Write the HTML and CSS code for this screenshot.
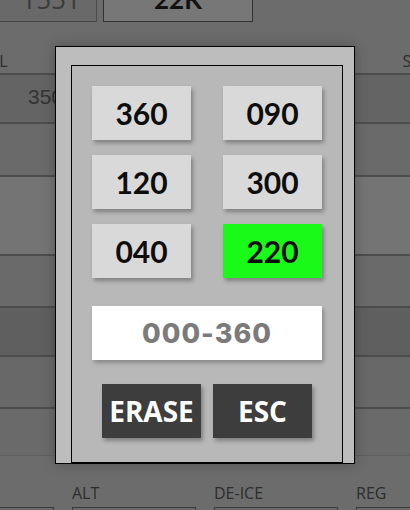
FILE: index.html
```html
<!DOCTYPE html>
<html>
<head>
<meta charset="utf-8">
<link rel="stylesheet" href="styles.css">
</head>
<body>
<div class="page">
  <div class="topbar">
    <div class="tbox tbox-a">1551</div>
    <div class="tbox tbox-b">22K</div>
  </div>
  <div class="labels">
    <span class="lbl lbl-fl">FL</span>
    <span class="lbl lbl-st">ST</span>
  </div>
  <div class="rows">
    <div class="row r1"><span class="cell-val">350</span></div>
    <div class="row r2"></div>
    <div class="row r3"></div>
    <div class="row r4"></div>
    <div class="row r5"></div>
    <div class="row r6"></div>
    <div class="row r7"></div>
  </div>
  <div class="footer">
    <div class="fcol"><span class="flbl">&nbsp;</span><div class="fbox"></div></div>
    <div class="fcol"><span class="flbl">ALT</span><div class="fbox"></div></div>
    <div class="fcol"><span class="flbl">DE-ICE</span><div class="fbox"></div></div>
    <div class="fcol"><span class="flbl">REG</span><div class="fbox"></div></div>
  </div>
</div>

<div class="modal">
  <div class="panel">
    <div class="grid">
      <button class="key">360</button>
      <button class="key">090</button>
      <button class="key">120</button>
      <button class="key">300</button>
      <button class="key">040</button>
      <button class="key key-on">220</button>
    </div>
    <div class="entry">000-360</div>
    <div class="actions">
      <button class="act">ERASE</button>
      <button class="act">ESC</button>
    </div>
  </div>
</div>
</body>
</html>
```
FILE: styles.css
```css
html, body {
  margin: 0;
  padding: 0;
}
body {
  width: 410px;
  height: 510px;
  overflow: hidden;
  background: #6c6c6c;
  font-family: "Open Sans", "Liberation Sans", sans-serif;
  position: relative;
}
.page {
  width: 410px;
}
.topbar {
  display: flex;
  margin-top: -14px;
  height: 36px;
}
.tbox {
  box-sizing: border-box;
  height: 36px;
  display: flex;
  align-items: center;
  justify-content: center;
  font-size: 26px;
  line-height: 1;
  padding-bottom: 10px;
}
.tbox-a {
  width: 97px;
  background: #696969;
  border-bottom: 1px solid #454545;
  border-right: 1px solid #4c4c4c;
  color: #3a3a3a;
  padding-left: 6px;
}
.tbox-b {
  width: 150px;
  margin-left: 6px;
  background: #777777;
  border: 1px solid #333333;
  border-top: none;
  color: #111111;
  font-weight: 700;
  font-family: Lato, "Open Sans", sans-serif;
}
.labels {
  height: 51px;
  display: flex;
  justify-content: space-between;
  align-items: flex-end;
  padding-bottom: 4px;
  box-sizing: border-box;
}
.lbl {
  font-size: 16px;
  line-height: 16px;
  color: #2c2c2c;
}
.lbl-fl { margin-left: -9px; }
.lbl-st { margin-right: -10px; }
.rows {
  display: flex;
  flex-direction: column;
}
.row {
  box-sizing: border-box;
  border-top: 2px solid #4d4d4d;
  display: flex;
  align-items: center;
}
.r1 { height: 49px; background: #646464; }
.r2 { height: 53px; background: #6a6a6a; }
.r3 { height: 79px; background: #747474; }
.r4 { height: 52px; background: #6a6a6a; }
.r5 { height: 49px; background: #5f5f5f; }
.r6 { height: 52px; background: #686868; }
.r7 { height: 49px; background: #6a6a6a; border-bottom: 1px solid #606060; }
.cell-val {
  width: 63px;
  text-align: right;
  font-size: 21px;
  color: #333333;
  font-family: "Liberation Sans", sans-serif;
  padding-bottom: 3px;
}
.footer {
  display: flex;
  gap: 18px;
  margin-left: -70px;
  margin-top: 28px;
}
.fcol {
  width: 124px;
  flex: none;
  display: flex;
  flex-direction: column;
}
.flbl {
  font-size: 16px;
  line-height: 18px;
  color: #2c2c2c;
  height: 18px;
}
.fbox {
  margin-top: 5px;
  height: 30px;
  border: 1px solid #3a3a3a;
  background: #6a6a6a;
}

.modal {
  position: absolute;
  left: 55px;
  top: 46px;
  width: 300px;
  height: 418px;
  box-sizing: border-box;
  border: 1px solid #000000;
  background: #bdbdbd;
  padding: 18px 11px 0 15px;
  box-shadow: 0 0 12px rgba(0, 0, 0, 0.25);
}
.panel {
  box-sizing: border-box;
  width: 272px;
  height: 398px;
  border: 1px solid #000000;
  background: #b8b8b8;
  padding: 20px 0 0 20px;
}
.grid {
  display: grid;
  grid-template-columns: 99px 99px;
  grid-auto-rows: 54px;
  column-gap: 32px;
  row-gap: 15px;
}
button {
  border: none;
  margin: 0;
  padding: 0;
  cursor: pointer;
}
.key {
  background: #d9d9d9;
  color: #0d0d0d;
  font-family: Lato, "Open Sans", sans-serif;
  font-weight: 700;
  font-size: 30px;
  box-shadow: 2px 3px 4px rgba(0, 0, 0, 0.3);
}
.key-on {
  background: #19fa19;
}
.entry {
  margin-top: 28px;
  width: 230px;
  height: 54px;
  background: #ffffff;
  display: flex;
  align-items: center;
  justify-content: center;
  font-family: Inter, "Open Sans", sans-serif;
  font-weight: 800;
  font-size: 27px;
  letter-spacing: 1px;
  color: #7b7b7b;
  box-shadow: 2px 3px 4px rgba(0, 0, 0, 0.25);
}
.actions {
  margin-top: 24px;
  margin-left: 10px;
  display: flex;
  gap: 12px;
}
.act {
  width: 99px;
  height: 54px;
  background: #3d3d3d;
  color: #ffffff;
  font-family: "Open Sans", sans-serif;
  font-weight: 700;
  font-size: 28px;
  box-shadow: 2px 3px 4px rgba(0, 0, 0, 0.3);
}
```
